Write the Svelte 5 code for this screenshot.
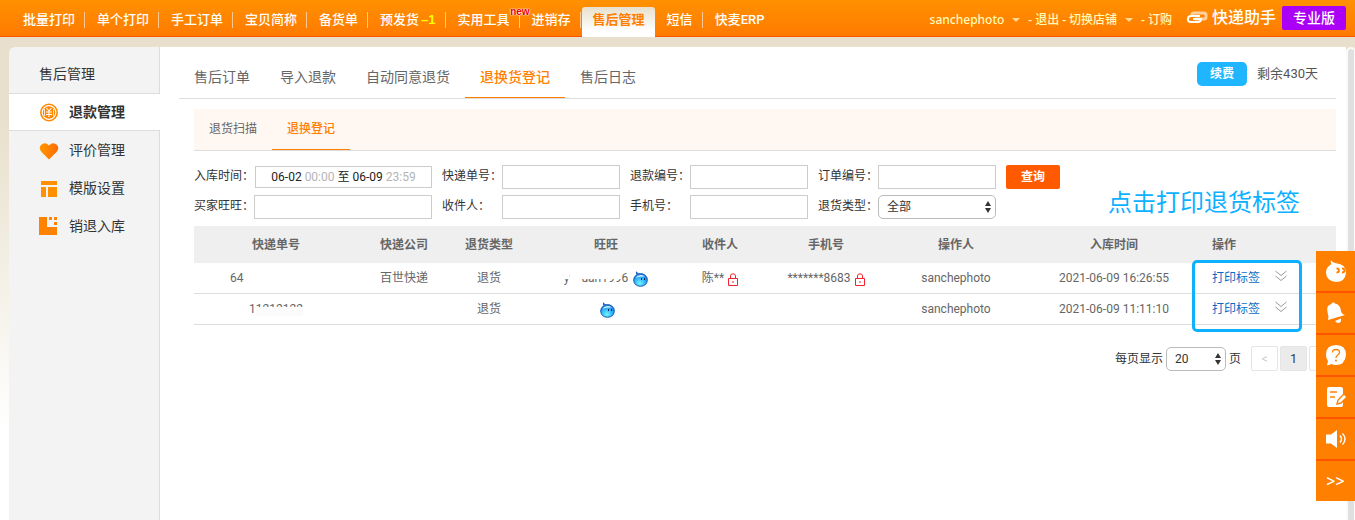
<script lang="ts">
	interface NavItem {
		label: string;
		count?: string;
		isNew?: boolean;
		active?: boolean;
	}

	const navItems: NavItem[] = [
		{ label: '批量打印' },
		{ label: '单个打印' },
		{ label: '手工订单' },
		{ label: '宝贝简称' },
		{ label: '备货单' },
		{ label: '预发货', count: '–1' },
		{ label: '实用工具', isNew: true },
		{ label: '进销存' },
		{ label: '售后管理', active: true },
		{ label: '短信' },
		{ label: '快麦ERP' }
	];

	const sideItems = [
		{ label: '退款管理', icon: 'coin' },
		{ label: '评价管理', icon: 'heart' },
		{ label: '模版设置', icon: 'template' },
		{ label: '销退入库', icon: 'stock' }
	];

	const tabs = ['售后订单', '导入退款', '自动同意退货', '退换货登记', '售后日志'];
	const subTabs = ['退货扫描', '退换登记'];

	const rows = [
		{ no: 'a', company: '百世快递', type: '退货', receiver: '陈**', phone: '*******8683', operator: 'sanchephoto', time: '2021-06-09 16:26:55' },
		{ no: 'b', company: '', type: '退货', receiver: '', phone: '', operator: 'sanchephoto', time: '2021-06-09 11:11:10' }
	];

	const tools = [
		{ icon: 'wangwang', label: '旺旺' },
		{ icon: 'bell', label: '通知' },
		{ icon: 'help', label: '帮助' },
		{ icon: 'note', label: '反馈' },
		{ icon: 'sound', label: '公告' }
	];

	let sideActive = $state(0);
	let tabActive = $state(3);
	let subActive = $state(1);
	let returnType = $state('全部');
	let pageSize = $state('20');
</script>

{#snippet lock()}
	<svg class="lock" viewBox="0 0 10 13" width="10" height="13" aria-hidden="true">
		<path d="M.5 5.5h9v7h-9zM2.5 5.500V3Q2.500.8 5 .8T7.500 3v2.500" fill="none" stroke="#f5222d" />
		<path d="M4.500 8h1v2h-1z" fill="#f5222d" />
	</svg>
{/snippet}

{#snippet wangwang()}
	<svg class="ww" viewBox="0 0 15 16" width="15" height="16" aria-hidden="true">
		<defs>
			<radialGradient id="wwFill" cx=".45" cy=".8" r=".7">
				<stop offset="0" stop-color="#6ff6ff" />
				<stop offset=".55" stop-color="#35b4fa" />
				<stop offset="1" stop-color="#1a72d8" />
			</radialGradient>
		</defs>
		<path d="M3.500.8Q4 3 6 2.800Q10 2 12.500 4.500Q14.500 6.500 14.300 9.200Q13.800 15 7.500 15.300Q1 15 .7 9Q.6 5.500 4 3.600Q3 2.500 3.500.8z" fill="url(#wwFill)" stroke="#1559b8" />
		<path d="M2.500 6.800Q4.500 4 8 4Q10.500 4 12 5.500Q7 5 2.500 6.800z" fill="#d6f4ff" />
		<path d="M8 7h1v2H8zM11 7h1v2h-1z" fill="#06245c" />
	</svg>
{/snippet}

<header class="topbar">
	<nav class="topnav">
		{#each navItems as item}
			<a href="#top" class:active={item.active}>
				{item.label}{#if item.count}<b class="count">{item.count}</b>{/if}
				{#if item.isNew}<sup class="new">new</sup>{/if}
			</a>
		{/each}
	</nav>
	<div class="account">
		<a href="#user">sanchephoto</a>
		<i class="caret"></i>
		<span>-</span>
		<a href="#logout">退出</a>
		<span>-</span>
		<a href="#shop">切换店铺</a>
		<i class="caret"></i>
		<span>-</span>
		<a href="#buy">订购</a>
	</div>
	<div class="brand">
		<svg viewBox="0 0 22 14" width="22" height="14" aria-hidden="true">
			<path d="M6 5V4Q6 2 8 2H18Q20 2 20 4V6Q20 8 18 8H9" fill="none" stroke="#ffcf9c" stroke-width="3" />
			<path d="M14 5H5Q2 5 2 8V9Q2 11 5 11H12Q15 11 15 8H7" fill="none" stroke="#fff" stroke-width="2" />
		</svg>
		<span>快递助手</span>
	</div>
	<button class="edition">专业版</button>
</header>

<div class="page" lang="zh-CN">
	<aside class="sidebar">
		<h2>售后管理</h2>
		{#each sideItems as item, index}
			<button class:active={sideActive === index} onclick={() => (sideActive = index)}>
				<svg viewBox="0 0 20 20" width="20" height="20" aria-hidden="true">
					{#if item.icon === 'coin'}
						<circle cx="10" cy="10.500" r="8.200" fill="none" stroke="#ff8800" stroke-width="1.600" />
						<circle cx="10" cy="10.500" r="6.200" fill="#ff8800" />
						<path d="M7.500 6l2.500 3 2.500-3M7 10h6M7 12.500h6M10 9v6" fill="none" stroke="#fff" stroke-width="1.100" />
						<path d="M5.500 7v7M14.500 7v7" stroke="#fff" stroke-width=".8" />
					{:else if item.icon === 'heart'}
						<linearGradient id="heartFill">
							<stop offset="0" stop-color="#ff9800" />
							<stop offset="1" stop-color="#ff6a00" />
						</linearGradient>
						<path d="M10 19.500L2.500 12Q-.8 8 2 5Q6 1.500 10 5.500Q14 1.500 18 5Q20.800 8 17.500 12z" fill="url(#heartFill)" />
					{:else if item.icon === 'template'}
						<path d="M2 3h16v4H2zM2 9h5v10H2zM9 9h9v10H9z" fill="#ff9100" />
					{:else}
						<path d="M0 1h8v10h10v8H0zM10 1h3v3h-3zM15 1h3v3h-3zM15 6h3v3h-3z" fill="#ff8200" />
					{/if}
				</svg>
				{item.label}
			</button>
		{/each}
	</aside>

	<main>
		<div class="tabs">
			{#each tabs as tab, index}
				<button class:active={tabActive === index} onclick={() => (tabActive = index)}>{tab}</button>
			{/each}
			<div class="renew">
				<button>续费</button>
				<span>剩余430天</span>
			</div>
		</div>

		<div class="content">
			<div class="subtabs">
				{#each subTabs as tab, index}
					<button class:active={subActive === index} onclick={() => (subActive = index)}>{tab}</button>
				{/each}
			</div>

			<form class="filters" onsubmit={(e) => e.preventDefault()}>
				<label for="range">入库时间：</label>
				<button type="button" id="range" class="range">06-02 <em>00:00</em> 至 06-09 <em>23:59</em></button>
				<label for="no">快递单号：</label>
				<input id="no" />
				<label for="refund">退款编号：</label>
				<input id="refund" />
				<label for="order">订单编号：</label>
				<input id="order" />
				<button class="search">查询</button>

				<label for="buyer">买家旺旺：</label>
				<input id="buyer" />
				<label for="receiver">收件人：</label>
				<input id="receiver" />
				<label for="phone">手机号：</label>
				<input id="phone" />
				<label for="type">退货类型：</label>
				<span class="select">
					<select id="type" bind:value={returnType}>
						<option>全部</option>
						<option>退货</option>
					</select>
					<svg viewBox="0 0 6 12" width="6" height="12" aria-hidden="true"><path d="M0 5l3-5 3 5zM0 7l3 5 3-5z" fill="#333" /></svg>
				</span>
			</form>

			<div class="records">
				<table>
					<thead>
						<tr>
							<th class="w-no">快递单号</th>
							<th class="w-company">快递公司</th>
							<th class="w-type">退货类型</th>
							<th class="w-ww">旺旺</th>
							<th class="w-receiver">收件人</th>
							<th class="w-phone">手机号</th>
							<th class="w-operator">操作人</th>
							<th class="w-time">入库时间</th>
							<th class="w-action">操作</th>
						</tr>
					</thead>
					<tbody>
						{#each rows as row}
							<tr>
								<td>
									{#if row.no === 'a'}
										<span class="tracking">64</span>
									{:else}
										1<span class="erased bottom">1212122</span>
									{/if}
								</td>
								<td>{row.company}</td>
								<td>{row.type}</td>
								<td>
									{#if row.no === 'a'}
										<span class="erased top nick">y</span><span class="erased top">uan199</span>6
									{/if}
									{@render wangwang()}
								</td>
								<td>{row.receiver}{#if row.receiver}{@render lock()}{/if}</td>
								<td>{row.phone}{#if row.phone}{@render lock()}{/if}</td>
								<td>{row.operator}</td>
								<td>{row.time}</td>
								<td class="action">
									<a href="#print">打印标签</a>
									<svg viewBox="0 0 12 12" width="12" height="12" aria-hidden="true">
										<path d="M.5 1L6 5.500 11.500 1M.5 6L6 10.500 11.500 6" fill="none" stroke="#999" />
									</svg>
								</td>
							</tr>
						{/each}
					</tbody>
				</table>
				<strong class="tip">点击打印退货标签</strong>
				<div class="frame"></div>
			</div>

			<div class="pager">
				<label for="size">每页显示</label>
				<span class="select">
					<select id="size" bind:value={pageSize}>
						<option>20</option>
						<option>50</option>
					</select>
					<svg viewBox="0 0 6 12" width="6" height="12" aria-hidden="true"><path d="M0 5l3-5 3 5zM0 7l3 5 3-5z" fill="#333" /></svg>
				</span>
				<span>页</span>
				<div class="pages">
					<button disabled>&lt;</button>
					<button class="current">1</button>
					<button disabled aria-label="下一页"></button>
				</div>
			</div>
		</div>
	</main>
	<div class="scroll"></div>
</div>

<div class="tools">
	{#each tools as tool}
		<button aria-label={tool.label}>
			<svg viewBox="0 0 22 22" width="22" height="22" aria-hidden="true">
				{#if tool.icon === 'wangwang'}
					<path d="M6 0Q7 2.500 11 3.200Q21 4 21 13Q20 22 11 22Q1 21 1 12.500Q1 7 6.500 4Q5 2 6 0z" fill="#fff" />
					<path d="M11.500 8.500q2.500 0 2.500 2t-2.500 2M17 8.500q2.500 0 2.500 2t-2.500 2" fill="none" stroke="#ff8000" stroke-width="1.800" />
				{:else if tool.icon === 'bell'}
					<path d="M3 18Q4 15 2.500 10Q1 3 6.500 2L7 .8Q9 0 10 1.500Q15 2 16 9Q16.500 12 20 13z" fill="#fff" />
					<path d="M10 19l6-2.500Q16.500 20 14 21Q11.500 21.500 10 19z" fill="#fff" />
				{:else if tool.icon === 'help'}
					<path d="M11 1Q21 1 21 11Q20 21 11 21Q8 21 6.500 20L2 21.500L3 17Q1 14.500 1 11Q1 1 11 1z" fill="#fff" />
					<path d="M7.500 8.500Q7.500 5.500 11 5.500T14.500 8.500Q14.500 10 12.500 11.200Q11 12.200 11 14" fill="none" stroke="#ff8000" stroke-width="1.300" />
					<circle cx="11" cy="16.500" r="1" fill="#ff8000" />
				{:else if tool.icon === 'note'}
					<rect x="2" y="1" width="16" height="20" rx="2" fill="#fff" />
					<path d="M5 6h7M5 11h5" stroke="#ff8000" stroke-width="1.600" />
					<path d="M12 18l1-4 6-6 3 3-6 6z" fill="#fff" stroke="#ff8000" stroke-width="1.400" />
				{:else}
					<path d="M1 6.500h5L12 2v18l-6-4.500H1z" fill="#fff" />
					<path d="M15 7.500q3 3.500 0 7M17.500 5.500q5 5.500 0 11" fill="none" stroke="#fff" stroke-width="1.400" />
				{/if}
			</svg>
		</button>
	{/each}
	<button class="more">&gt;&gt;</button>
</div>

<style>
	:global(body) {
		margin: 0;
		font-family: Roboto, 'Noto Sans CJK SC', sans-serif;
		font-size: 12px;
		line-height: 18px;
		color: #333;
	}
	:global(#app) {
		display: flex;
		flex-direction: column;
		min-height: 100vh;
		background: linear-gradient(#e8e0cc 120px, #fff 430px);
	}
	button, input, select {
		box-sizing: border-box;
		margin: 0;
		padding: 0;
		border: none;
		background: transparent;
		font: inherit;
		color: inherit;
	}
	button {
		cursor: pointer;
		white-space: nowrap;
	}
	a {
		text-decoration: none;
		color: inherit;
	}

	.topbar {
		display: flex;
		box-sizing: border-box;
		height: 37px;
		padding: 0 9px 0 11px;
		border-bottom: 1px solid #ff5500;
		background: linear-gradient(#ff9100, #ff7a00);
		color: #fff;
	}
	.topnav {
		display: flex;
		flex: 1;
		font-size: 13px;
		font-weight: 500;
	}
	.topnav a {
		position: relative;
		display: flex;
		padding: 11px 10px 8px 12px;
		white-space: nowrap;
	}
	.topnav a::after {
		content: '';
		position: absolute;
		right: 0;
		top: 12px;
		width: 1px;
		height: 16px;
		background: #ffc890;
	}
	.topnav a.active::after, .topnav a:last-child::after {
		display: none;
	}
	.topnav a.active {
		height: 19px;
		margin: 7px 0 0 1px;
		padding: 4px 10px 7px 11px;
		border-radius: 3px 3px 0 0;
		background: linear-gradient(#e8e0cc, #fff 24px);
		color: #ff8000;
		font-weight: 700;
	}
	.count {
		margin-left: 2px;
		font-family: 'Liberation Sans', sans-serif;
		font-size: 13px;
		line-height: 17px;
		color: #ffff00;
	}
	.new {
		position: absolute;
		z-index: 1;
		top: 7px;
		right: -10px;
		font-family: 'Liberation Sans', sans-serif;
		font-size: 10px;
		font-weight: 700;
		line-height: 10px;
		color: #e60000;
		text-shadow: 0 0 1px #fff, 0 0 1px #fff, 0 0 2px #fff;
	}
	.account {
		display: flex;
		align-items: center;
		gap: 3px;
		padding-top: 3px;
		font-family: 'Noto Sans', 'Noto Sans CJK SC', sans-serif;
		font-weight: 500;
		color: #fffbb8;
		white-space: nowrap;
	}
	.caret {
		margin: 0 5px;
		border: 4px solid transparent;
		border-top-color: #ffd890;
		border-bottom: none;
	}
	.brand {
		display: flex;
		align-items: center;
		gap: 4px;
		margin: 0 6px 0 14px;
		font-size: 16px;
		font-weight: 500;
		white-space: nowrap;
	}
	.edition {
		width: 64px;
		height: 24px;
		margin-top: 6px;
		border-radius: 2px;
		background: #aa00f5;
		font-size: 14px;
		font-weight: 500;
	}

	.page {
		display: flex;
		flex: 1;
		margin: 10px 0 0 9px;
	}
	.sidebar {
		box-sizing: border-box;
		display: flex;
		flex-direction: column;
		width: 151px;
		border-radius: 6px 0 0 0;
		background: linear-gradient(#ddd, #ddd) right / 1px 100% no-repeat #f3f3f3;
		font-size: 14px;
	}
	.sidebar h2 {
		margin: 0;
		padding: 18px 30px 10px;
		font-size: 14px;
		font-weight: 400;
	}
	.sidebar button {
		display: flex;
		align-items: center;
		gap: 10px;
		height: 38px;
		padding-left: 30px;
		border: solid transparent;
		border-width: 1px 0;
	}
	.sidebar button.active {
		border-color: #ddd;
		background: #fff;
		font-weight: 700;
	}

	main {
		flex: 1;
		min-width: 0;
		padding: 0 10px 0 19px;
		background: #fff;
	}
	.tabs {
		display: flex;
		height: 51px;
		border-bottom: 1px solid #ddd;
		font-size: 14px;
		color: #666;
	}
	.tabs > button {
		padding: 10px 15px 0;
		border-bottom: 1px solid transparent;
	}
	.tabs > button.active, .subtabs button.active {
		border-color: #ff8000;
		color: #ff8000;
		font-weight: 500;
	}
	.renew {
		display: flex;
		align-items: center;
		gap: 10px;
		height: 24px;
		margin: 15px 18px 0 auto;
		font-size: 13px;
		color: #555;
	}
	.renew button {
		width: 50px;
		height: 24px;
		border-radius: 5px;
		background: #1fb6ff;
		font-size: 12px;
		font-weight: 700;
		color: #fff;
	}

	.content {
		padding: 10px 0 0 15px;
	}
	.subtabs {
		display: flex;
		height: 41px;
		border-bottom: 1px solid #ddd;
		background: #fff8f2;
		color: #666;
	}
	.subtabs button {
		padding: 0 15px;
		border-bottom: 1px solid transparent;
	}

	.filters {
		display: grid;
		grid-template-columns: 60px 178px repeat(3, 70px 118px) 64px;
		grid-auto-rows: 24px;
		row-gap: 6px;
		padding: 14px 0 7px;
	}
	.filters label {
		padding-top: 2px;
		white-space: nowrap;
	}
	.filters label:not(:nth-of-type(4n + 1)) {
		padding-left: 10px;
	}
	.filters input, .range {
		border: 1px solid #ccc;
		background: #fff;
	}
	.range {
		height: 22px;
		margin: 1px 0 0 1px;
		color: #222;
	}
	.range em {
		font-style: normal;
		color: #b5b5b5;
	}
	.search {
		margin-left: 10px;
		border-radius: 2px;
		background: #ff5a00;
		color: #fff;
		font-weight: 700;
	}
	.select {
		display: flex;
		align-items: center;
		box-sizing: border-box;
		height: 24px;
		padding-right: 4px;
		border: 1px solid #bbb;
		border-radius: 5px;
		background: #fff;
	}
	.select select {
		flex: 1;
		min-width: 0;
		height: 22px;
		padding-left: 8px;
		appearance: none;
	}

	.records {
		position: relative;
	}
	table {
		width: 100%;
		table-layout: fixed;
		border-collapse: separate;
		border-spacing: 0;
		color: #666;
	}
	th {
		height: 37px;
		padding: 0;
		background: #efefef;
		font-weight: 700;
	}
	td {
		height: 30px;
		padding: 0;
		border-bottom: 1px solid #ddd;
		text-align: center;
		white-space: nowrap;
	}
	.w-no { width: 164px; }
	.w-company { width: 92px; }
	.w-type { width: 78px; }
	.w-ww { width: 156px; }
	.w-receiver { width: 72px; }
	.w-phone { width: 140px; }
	.w-operator { width: 120px; }
	.w-time { width: 196px; }
	.w-action {
		width: 124px;
		text-align: left;
	}
	.action {
		text-align: left;
	}
	.action a {
		margin-right: 12px;
		color: #0b6cc4;
	}
	.lock {
		margin-left: 4px;
		vertical-align: -4px;
	}
	.ww {
		margin-left: 2px;
		vertical-align: -5px;
	}
	.tracking {
		display: inline-block;
		width: 92px;
		text-align: left;
	}
	.erased {
		position: relative;
	}
	/* white strip over the private part of a number or nick */
	.erased::after {
		content: '';
		position: absolute;
		left: 0;
		right: 0;
		height: 9px;
		background: #fff;
	}
	.erased.bottom::after {
		top: 5px;
		background: #fbfbfb;
	}
	.erased.top::after {
		top: -1px;
	}
	.nick {
		margin-right: 12px;
	}
	.tip {
		position: absolute;
		right: 36px;
		top: -39px;
		font-size: 24px;
		font-weight: 400;
		line-height: 32px;
		color: #0db1ff;
	}
	.frame {
		position: absolute;
		box-sizing: border-box;
		right: 34px;
		top: 34px;
		width: 110px;
		height: 72px;
		border: 3px solid #0db1ff;
		border-radius: 5px;
		pointer-events: none;
	}

	.pager {
		display: flex;
		align-items: center;
		justify-content: flex-end;
		gap: 3px;
		padding-top: 21px;
	}
	.pager .select {
		width: 60px;
	}
	.pages {
		display: flex;
		gap: 2px;
		margin-left: 7px;
	}
	.pages button {
		width: 27px;
		height: 25px;
		border: 1px solid #e5e5e5;
		border-radius: 2px;
		color: #ccc;
	}
	.pages .current {
		background: #ebebeb;
		color: #333;
	}

	.scroll {
		width: 6px;
		margin: 2px 1px 0 2px;
		border-radius: 4px 4px 0 0;
		background: #e0e0e0;
		box-shadow: 0 0 0 2px #fafafa;
	}

	.tools {
		position: fixed;
		right: 0;
		top: 251px;
		display: flex;
		flex-direction: column;
		gap: 2px;
		width: 39px;
		background: #ff5500;
	}
	.tools button {
		display: flex;
		align-items: center;
		justify-content: center;
		height: 40px;
		background: #ff8000;
		color: #fff;
	}
	.tools .more {
		font-family: 'Noto Sans', sans-serif;
		font-size: 16px;
		font-weight: 500;
	}
</style>
